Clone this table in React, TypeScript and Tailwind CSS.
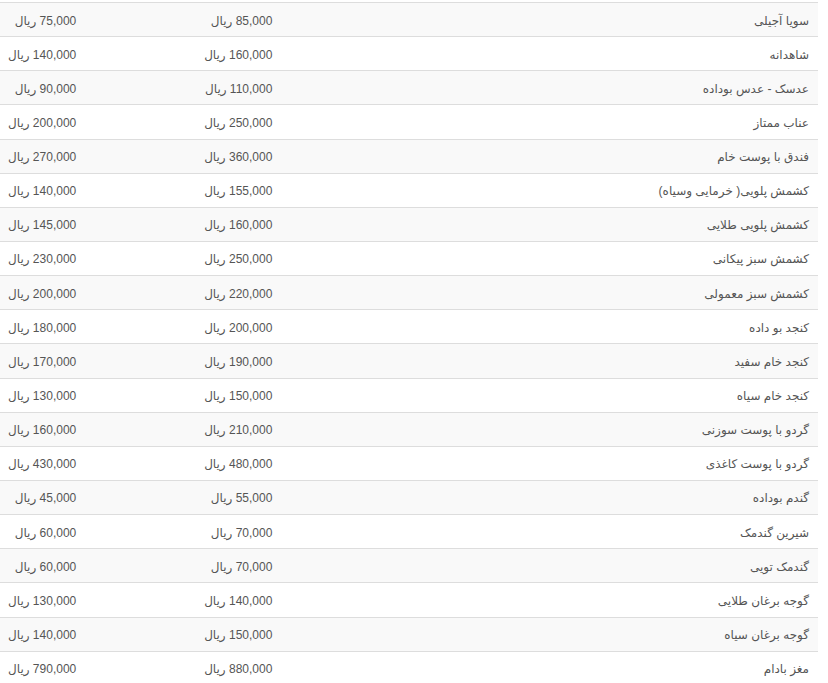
import React from "react";

const rows: [string, string, string][] = [
  ["سویا آجیلی", "85,000", "75,000"],
  ["شاهدانه", "160,000", "140,000"],
  ["عدسک - عدس بوداده", "110,000", "90,000"],
  ["عناب ممتاز", "250,000", "200,000"],
  ["فندق با پوست خام", "360,000", "270,000"],
  ["کشمش پلویی( خرمایی وسیاه)", "155,000", "140,000"],
  ["کشمش پلویی طلایی", "160,000", "145,000"],
  ["کشمش سبز پیکانی", "250,000", "230,000"],
  ["کشمش سبز معمولی", "220,000", "200,000"],
  ["کنجد بو داده", "200,000", "180,000"],
  ["کنجد خام سفید", "190,000", "170,000"],
  ["کنجد خام سیاه", "150,000", "130,000"],
  ["گردو با پوست سوزنی", "210,000", "160,000"],
  ["گردو با پوست کاغذی", "480,000", "430,000"],
  ["گندم بوداده", "55,000", "45,000"],
  ["شیرین گندمک", "70,000", "60,000"],
  ["گندمک تویی", "70,000", "60,000"],
  ["گوجه برغان طلایی", "140,000", "130,000"],
  ["گوجه برغان سیاه", "150,000", "140,000"],
  ["مغز بادام", "880,000", "790,000"],
];

export default function App() {
  return (
    <div
      className="bg-white pt-[2px] h-[683px] overflow-hidden"
      style={{ fontFamily: '"Liberation Sans", "DejaVu Sans", sans-serif' }}
    >
      <table dir="rtl" className="w-[818px] border-collapse text-[12px] leading-[1.42857143] text-[#555]">
        <tbody>
          {rows.map(([name, p1, p2], i) => (
            <tr key={i} className={i % 2 === 0 ? "bg-[#f9f9f9]" : "bg-white"}>
              <td className="w-[539px] border-t border-[#ddd] pl-2 pr-[9px] pt-[9.5px] pb-[6.5px] text-right">{name}</td>
              <td className="w-[196px] border-t border-[#ddd] px-2 pt-[9.5px] pb-[6.5px] text-right">{p1} ریال</td>
              <td className="w-[83px] border-t border-[#ddd] pl-2 pr-[8.5px] pt-[9.5px] pb-[6.5px] text-right whitespace-nowrap">{p2} ریال</td>
            </tr>
          ))}
        </tbody>
      </table>
    </div>
  );
}
